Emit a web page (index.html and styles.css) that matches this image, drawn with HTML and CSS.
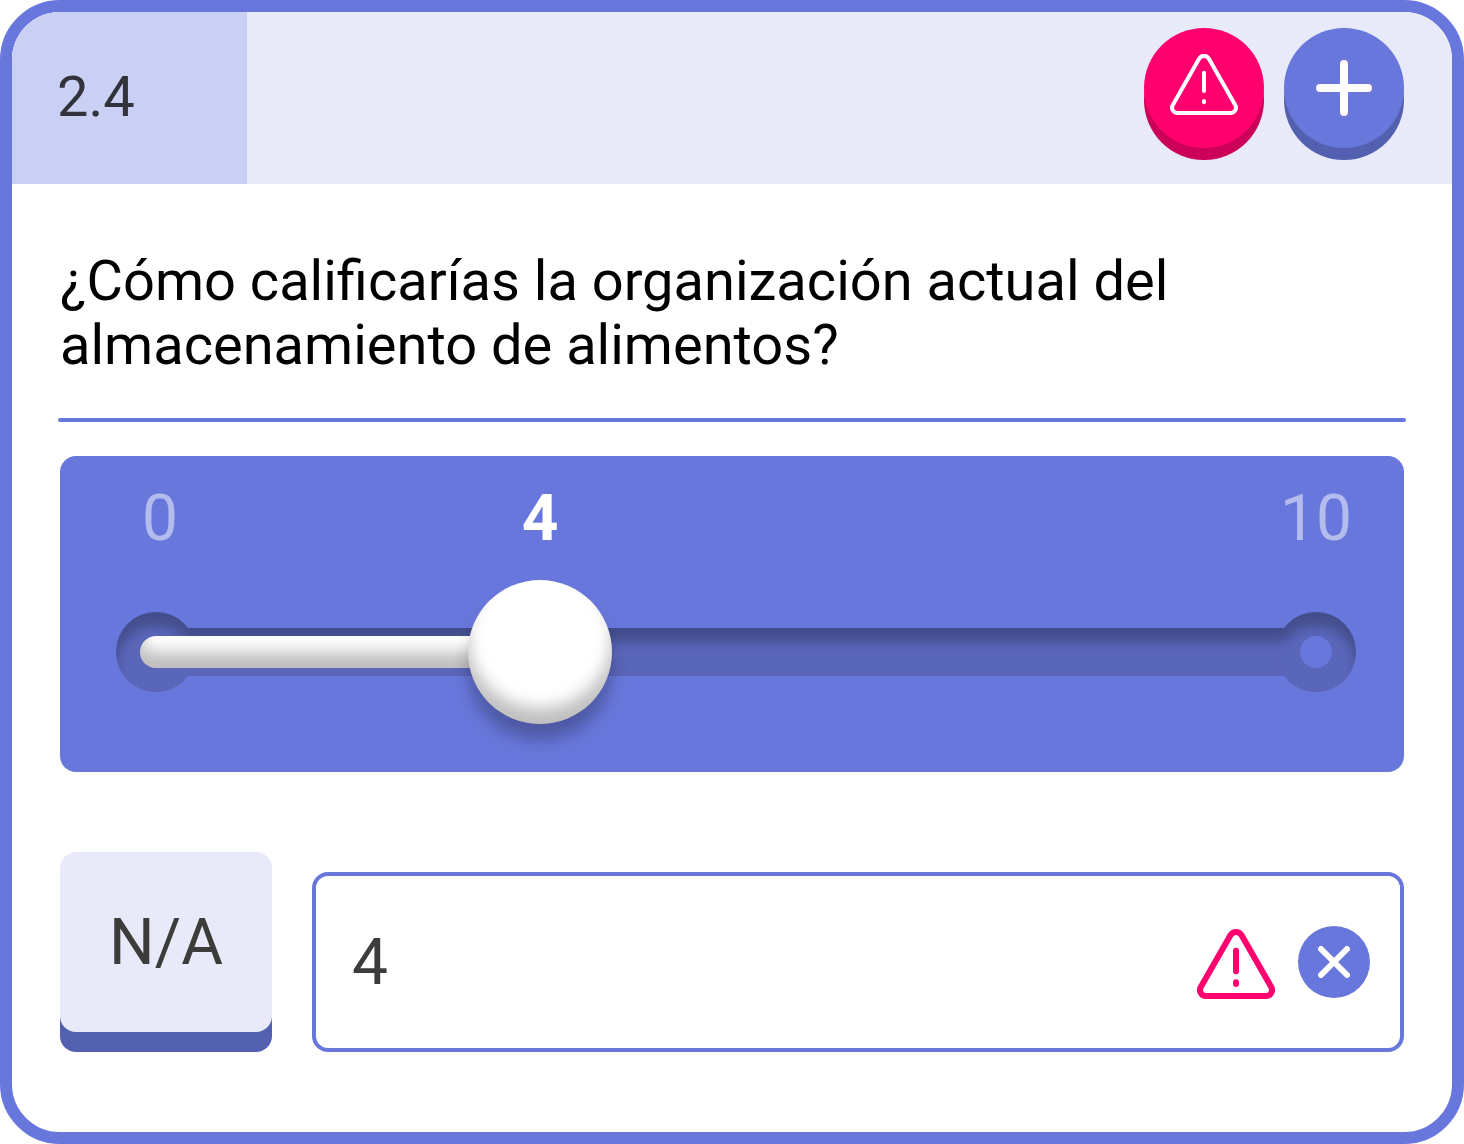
FILE: index.html
```
<!DOCTYPE html>
<html lang="es">
<head>
    <meta charset="UTF-8">
    <meta name="viewport" content="width=device-width, initial-scale=1.0">
    <title>Pregunta 2.4</title>
    <link rel="stylesheet" href="styles.css">
</head>
<body>
    <form class="card">
        <header class="card-header">
            <div class="question-number">2.4</div>
            <div class="header-actions">
                <button type="button" class="round-button alert" aria-label="Ver alerta">
                    <svg width="68" height="61" viewBox="0 0 68 61" fill="none" stroke="currentColor" stroke-width="4" stroke-linecap="round">
                        <path d="M29.1 4.8A5.65 5.65 0 0 1 38.9 4.8L65.2 51A5.3 5.3 0 0 1 60.6 59H7.4A5.3 5.3 0 0 1 2.8 51Z"/>
                        <path d="M34 18.7V37M34 47V48.3"/>
                    </svg>
                </button>
                <button type="button" class="round-button add" aria-label="Agregar">
                    <svg width="56" height="56" viewBox="0 0 56 56" fill="none" stroke="currentColor" stroke-width="8" stroke-linecap="round">
                        <path d="M28 4V52M4 28H52"/>
                    </svg>
                </button>
            </div>
        </header>

        <main class="card-body">
            <h1 class="question" id="question">¿Cómo calificarías la organización actual del almacenamiento de alimentos?</h1>
            <hr class="divider">

            <div class="slider-panel">
                <div class="scale">
                    <span>0</span>
                    <output class="current" for="rating">4</output>
                    <span>10</span>
                </div>
                <div class="slider">
                    <svg class="groove" aria-hidden="true">
                        <defs>
                            <filter id="inset" filterUnits="userSpaceOnUse" x="-60" y="-20" width="120%" height="120" color-interpolation-filters="sRGB">
                                <feOffset in="SourceAlpha" dy="14"/>
                                <feGaussianBlur stdDeviation="6" result="lowered"/>
                                <feComposite in="SourceAlpha" in2="lowered" operator="out"/>
                                <feColorMatrix values="0 0 0 0 0  0 0 0 0 0  0 0 0 0 0  0 0 0 0.25 0" result="shade"/>
                                <feMerge>
                                    <feMergeNode in="SourceGraphic"/>
                                    <feMergeNode in="shade"/>
                                </feMerge>
                            </filter>
                        </defs>
                        <g fill="#5a66ba" filter="url(#inset)">
                            <circle cx="0" cy="40" r="40"/>
                            <rect x="0" y="16" width="100%" height="48"/>
                            <circle cx="100%" cy="40" r="40"/>
                        </g>
                        <circle cx="100%" cy="40" r="16" fill="#6877db"/>
                    </svg>
                    <div class="fill"></div>
                    <input type="range" class="range" id="rating" min="1" max="10" value="4" aria-labelledby="question">
                </div>
            </div>

            <div class="answer-row">
                <button type="button" class="na-button">N/A</button>
                <div class="answer-box">
                    <input type="text" class="answer" value="4" aria-labelledby="question">
                    <svg class="warning" width="78" height="70" viewBox="0 0 78 70" fill="none" stroke="currentColor" stroke-width="6" stroke-linecap="round" aria-hidden="true">
                        <path d="M33.4 6.25A6.5 6.5 0 0 1 44.6 6.25L74.2 58A6 6 0 0 1 69 67H9A6 6 0 0 1 3.8 58Z"/>
                        <path d="M39 21.7V42.3M39 53.3V55"/>
                    </svg>
                    <button type="button" class="clear-button" aria-label="Borrar">
                        <svg width="32" height="32" viewBox="0 0 32 32" fill="none" stroke="currentColor" stroke-width="6" stroke-linecap="round">
                            <path d="M3 3L29 29M29 3L3 29"/>
                        </svg>
                    </button>
                </div>
            </div>
        </main>
    </form>
</body>
</html>
```
FILE: styles.css
```
* {
    box-sizing: border-box;
}
body {
    margin: 0;
    background-color: #fff;
    color: #000;
    font-family: Roboto, sans-serif;
}
button, input {
    font-family: inherit;
    cursor: pointer;
}
button {
    display: flex;
    align-items: center;
    justify-content: center;
    padding: 0;
    border: none;
}
.card {
    min-height: 100vh;
    border: 12px solid #6877db;
    border-radius: 60px;
    overflow: hidden;
}

/* Header */
.card-header {
    display: flex;
    justify-content: space-between;
    height: 172px;
    background-color: #e8eafa;
}
.question-number {
    display: flex;
    align-items: center;
    width: 235px;
    padding: 0 0 2px 45px;
    background-color: #cad0f4;
    color: #31323a;
    font-size: 56px;
    line-height: 64px;
}
.header-actions {
    display: flex;
    gap: 20px;
    padding: 16px 48px;
}
.round-button {
    width: 120px;
    height: 120px;
    border-radius: 50%;
    color: #fff;
}
.round-button.alert {
    padding-bottom: 8px;
    background-color: #ff006e;
    box-shadow: 0 12px 0 #cc0058;
}
.round-button.add {
    background-color: #6877db;
    box-shadow: 0 12px 0 #535faf;
}

/* Question */
.card-body {
    padding: 65px 48px 80px;
}
.question {
    margin: 0;
    font-size: 56px;
    font-weight: 400;
    line-height: 64px;
}
.divider {
    height: 4px;
    margin: 41px -2px 34px;
    border: none;
    border-radius: 2px;
    background-color: #6877db;
}

/* Slider */
.slider-panel {
    padding: 25px 48px 80px;
    border-radius: 16px;
    background-color: #6877db;
    color: #fff;
}
.scale {
    position: relative;
    display: flex;
    justify-content: space-between;
    padding: 0 4px 0 34px;
    font-size: 64px;
    line-height: 76px;
}
.scale span {
    opacity: 0.5;
}
.current {
    position: absolute;
    left: calc(48px + (100% - 96px) / 3);
    transform: translateX(-50%);
    font-weight: 700;
}
.slider {
    position: relative;
    margin-top: 55px;
    padding: 0 40px 0 48px;
}
.groove {
    display: block;
    width: 100%;
    height: 80px;
    overflow: visible;
}
.fill {
    position: absolute;
    top: 24px;
    left: 32px;
    width: 33%;
    height: 32px;
    border-radius: 16px;
    background-color: #fff;
    box-shadow: inset 0 -16px 16px rgba(0, 0, 0, 0.25);
}
.range {
    position: absolute;
    top: -32px;
    left: -24px;
    width: calc(100% + 48px);
    height: 144px;
    margin: 0;
    background: none;
    appearance: none;
}
.range::-webkit-slider-thumb {
    width: 144px;
    height: 144px;
    border: none;
    border-radius: 50%;
    background-color: #fff;
    box-shadow: 0 16px 16px rgba(0, 0, 0, 0.25), inset 0 -16px 16px rgba(0, 0, 0, 0.25);
    appearance: none;
}

/* Answer */
.answer-row {
    display: flex;
    gap: 40px;
    margin-top: 80px;
}
.na-button {
    width: 212px;
    height: 180px;
    border-radius: 16px;
    background-color: #e8eafa;
    box-shadow: 0 20px 0 #535faf;
    color: #3c3c3b;
    font-size: 64px;
}
.answer-box {
    display: flex;
    flex: 1;
    align-items: center;
    height: 180px;
    margin-top: 20px;
    padding: 0 30px 0 36px;
    border: 4px solid #6877db;
    border-radius: 16px;
}
.answer {
    flex: 1;
    min-width: 0;
    padding: 0;
    border: none;
    outline: none;
    background: none;
    color: #3c3c3b;
    font-size: 64px;
    cursor: text;
}
.warning {
    margin: 4px 23px 0 0;
    color: #ff006e;
}
.clear-button {
    width: 72px;
    height: 72px;
    border-radius: 50%;
    background-color: #6877db;
    color: #fff;
}
```
